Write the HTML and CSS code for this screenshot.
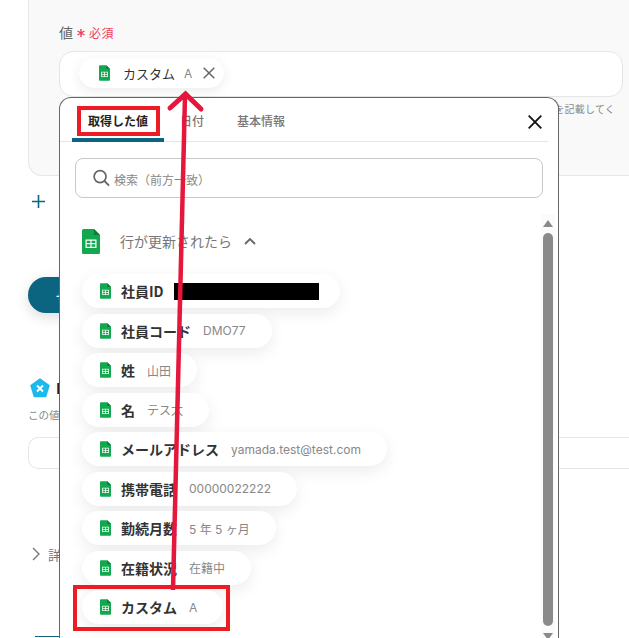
FILE: index.html
```html
<!DOCTYPE html>
<html lang="ja">
<head>
<meta charset="utf-8">
<title>値の設定</title>
<link rel="stylesheet" href="styles.css">
</head>
<body>
<svg class="defs" width="0" height="0" aria-hidden="true">
  <symbol id="sheet" viewBox="0 0 18 25">
    <path d="M1.5 0H12l6 6v17.5a1.5 1.5 0 0 1-1.5 1.5h-15A1.5 1.5 0 0 1 0 23.500V1.500A1.500 1.500 0 0 1 1.500 0z" fill="#11a84f"/>
    <path d="M12 0l6 6h-6z" fill="#0b7d3b"/>
    <path d="M3.500 10.500h11v8.500h-11z" fill="#fff"/>
    <path d="M4.700 11.800h3.700v2.300H4.700zM9.600 11.800h3.700v2.300H9.600zM4.700 15.300h3.700v2.400H4.700zM9.600 15.300h3.700v2.400H9.600z" fill="#11a84f"/>
  </symbol>
</svg>

<main class="page">
  <section class="card">
    <div class="field-label">
      <span class="label-text">値</span>
      <svg class="asterisk" viewBox="0 0 9 9"><path d="M4.500 0v9M.6 2.250l7.800 4.500M8.400 2.250l-7.800 4.500" stroke="#ef3f5f" stroke-width="1.600" fill="none"/></svg>
      <span class="required">必須</span>
    </div>
    <div class="value-input">
      <div class="input-chip">
        <svg class="icon-sm"><use href="#sheet"/></svg>
        <span class="input-chip-name">カスタム</span>
        <span class="input-chip-value">A</span>
        <svg class="input-chip-x" viewBox="0 0 12 12"><path d="M.7.7l10.600 10.600M11.300.7L.7 11.300" stroke="#666" stroke-width="1.500" fill="none"/></svg>
      </div>
    </div>
    <p class="hint">を記載してく</p>
  </section>

  <div class="add-row">
    <svg class="plus" viewBox="0 0 13 13"><path d="M6.500 0v13M0 6.500h13" stroke="#0b6480" stroke-width="1.600" fill="none"/></svg>
  </div>

  <button class="primary-btn">+ 追加する</button>

  <div class="section-title">
    <svg class="pentagon" viewBox="0 0 20 20">
      <path d="M10 1l9 6.500-3.400 11H4.400L1 7.500z" fill="#1cb9ec" stroke="#1cb9ec" stroke-width="1.500" stroke-linejoin="round"/>
      <path d="M7 7.500l6 6M13 7.500l-6 6" stroke="#fff" stroke-width="1.900"/>
    </svg>
    <span class="section-name">ID</span>
  </div>
  <p class="section-note">この値を使用します</p>
  <div class="plain-input"></div>

  <div class="detail-row">
    <svg class="detail-chevron" viewBox="0 0 8 14"><path d="M1 1l6 6-6 6" stroke="#777" stroke-width="1.400" fill="none"/></svg>
    <span class="detail-text">詳細</span>
  </div>
  <div class="bottom-btn"></div>
</main>

<aside class="panel">
  <div class="tabs">
    <div class="tab tab-active">取得した値</div>
    <div class="tab">日付</div>
    <div class="tab tab-wide">基本情報</div>
    <svg class="panel-close" viewBox="0 0 14 14"><path d="M.7.7l12.600 12.600M13.300.7L.7 13.300" stroke="#111" stroke-width="1.800" fill="none"/></svg>
  </div>
  <div class="search">
    <svg class="search-icon" viewBox="0 0 18 18"><circle cx="7.500" cy="7.500" r="6.300" stroke="#666" stroke-width="1.800" fill="none"/><path d="M12 12l5 5" stroke="#666" stroke-width="2" fill="none"/></svg>
    <span class="search-text">検索（前方一致）</span>
  </div>
  <div class="group-head">
    <svg class="icon-lg"><use href="#sheet"/></svg>
    <span class="group-name">行が更新されたら</span>
    <svg class="group-chevron" viewBox="0 0 12 8"><path d="M1 7l5-5 5 5" stroke="#666" stroke-width="1.800" fill="none"/></svg>
  </div>
  <ul class="list">
    <li class="chip"><svg class="icon-sm"><use href="#sheet"/></svg><span class="chip-name">社員ID</span><span class="redact"></span></li>
    <li class="chip"><svg class="icon-sm"><use href="#sheet"/></svg><span class="chip-name">社員コード</span><span class="chip-value">DMO77</span></li>
    <li class="chip"><svg class="icon-sm"><use href="#sheet"/></svg><span class="chip-name">姓</span><span class="chip-value">山田</span></li>
    <li class="chip"><svg class="icon-sm"><use href="#sheet"/></svg><span class="chip-name">名</span><span class="chip-value">テス太</span></li>
    <li class="chip"><svg class="icon-sm"><use href="#sheet"/></svg><span class="chip-name">メールアドレス</span><span class="chip-value">yamada.test@test.com</span></li>
    <li class="chip"><svg class="icon-sm"><use href="#sheet"/></svg><span class="chip-name">携帯電話</span><span class="chip-value">00000022222</span></li>
    <li class="chip"><svg class="icon-sm"><use href="#sheet"/></svg><span class="chip-name">勤続月数</span><span class="chip-value">5 年 5 ヶ月</span></li>
    <li class="chip"><svg class="icon-sm"><use href="#sheet"/></svg><span class="chip-name">在籍状況</span><span class="chip-value">在籍中</span></li>
    <li class="chip"><svg class="icon-sm"><use href="#sheet"/></svg><span class="chip-name">カスタム</span><span class="chip-value">A</span></li>
  </ul>
  <div class="scrollbar">
    <span class="scroll-up"></span>
    <span class="scroll-thumb"></span>
    <span class="scroll-down"></span>
  </div>
</aside>

<div class="mark mark-tab"></div>
<div class="mark mark-item"></div>
<svg class="arrow" viewBox="0 0 629 638">
  <path d="M173 590L185 96" stroke="#e6173c" stroke-width="4.500" fill="none"/>
  <path d="M170 108L185.500 94L201 109" stroke="#e6173c" stroke-width="5" fill="none" stroke-linecap="round" stroke-linejoin="miter"/>
</svg>
</body>
</html>
```

FILE: styles.css
```css
* { box-sizing: border-box; }

html, body {
  margin: 0;
  height: 638px;
  overflow: hidden;
  background: #fff;
}

body {
  position: relative;
  width: 629px;
  font-family: "Noto Sans CJK JP", "Noto Sans", sans-serif;
  color: #333;
}

.defs { position: absolute; }

.page {
  height: 638px;
  padding-left: 28px;
  display: flex;
  flex-direction: column;
  overflow: hidden;
}

/* background form */
.card {
  height: 206px;
  flex: none;
  margin-top: -30px;
  padding: 49px 0 0 30px;
  background: #f9f9f9;
  border: 1px solid #e6e6e6;
  border-right: 0;
  border-radius: 14px 0 0 14px;
}

.field-label {
  display: flex;
  align-items: center;
  height: 24px;
}

.label-text { font-size: 14px; color: #666; }
.asterisk { width: 8px; height: 8px; margin: 2px 0 0 4px; }
.required { margin-left: 4px; font-size: 12px; letter-spacing: .5px; color: #ef3f5f; }

.value-input {
  width: 564px;
  height: 46px;
  margin-top: 7px;
  padding: 6px 0 0 19px;
  background: #fff;
  border: 1px solid #e5e5e5;
  border-radius: 14px;
}

.input-chip {
  display: flex;
  align-items: center;
  width: 145px;
  height: 30px;
  padding-left: 20px;
  background: #fff;
  border-radius: 15px;
  box-shadow: 0 3px 12px rgba(0, 0, 0, .08);
}

.input-chip-name { margin-left: 13px; font-size: 13px; color: #333; }
.input-chip-value { margin-left: 9px; font-size: 12px; color: #888; font-family: "Inter", sans-serif; }
.input-chip-x { width: 12px; height: 12px; margin-left: 11px; }

.hint {
  width: 556px;
  margin: 5px 0 0;
  font-size: 10px;
  letter-spacing: .2px;
  line-height: 14px;
  text-align: right;
  color: #888;
}

.add-row { height: 52px; flex: none; padding: 19px 0 0 4px; }
.plus { display: block; width: 13px; height: 13px; }

.primary-btn {
  width: 210px;
  height: 36px;
  flex: none;
  margin-top: 49px;
  padding: 0 0 0 28px;
  border: 0;
  border-radius: 18px;
  text-align: left;
  background: #0b6480;
  color: #fff;
  font: 700 13px "Noto Sans CJK JP", sans-serif;
  box-shadow: 0 4px 14px rgba(0, 0, 0, .14);
}

.section-title {
  display: flex;
  align-items: center;
  gap: 6px;
  flex: none;
  margin-top: 65px;
  height: 20px;
  padding-left: 2px;
}

.pentagon { width: 20px; height: 20px; }
.section-name { font-size: 14px; font-weight: 700; color: #222; }

.section-note {
  margin: 9px 0 0;
  font-size: 10.500px;
  line-height: 15px;
  color: #888;
}

.plain-input {
  flex: none;
  height: 32px;
  margin-top: 15px;
  background: #fff;
  border: 1px solid #e5e5e5;
  border-right: 0;
  border-radius: 10px 0 0 10px;
}

.detail-row {
  display: flex;
  align-items: center;
  gap: 8px;
  flex: none;
  margin-top: 75px;
  height: 20px;
  padding-left: 4px;
}

.detail-chevron { width: 8px; height: 14px; }
.detail-text { font-size: 13px; color: #777; }

.bottom-btn {
  width: 120px;
  height: 1px;
  flex: none;
  margin: 72px 0 0 7px;
  background: #0b6480;
}

/* popover */
.panel {
  position: absolute;
  left: 59px;
  top: 97px;
  width: 500px;
  height: 541px;
  background: #fff;
  border: 1px solid #666;
  border-bottom: 0;
  border-radius: 12px 12px 0 0;
  overflow: hidden;
}

.tabs {
  position: relative;
  display: flex;
  height: 44px;
  margin-right: 10px;
  padding-left: 12px;
  border-bottom: 1px solid #e5e5e5;
}

.tab {
  padding: 14px 16px 0;
  font-size: 12px;
  line-height: 18px;
  color: #777;
  font-weight: 500;
}

.tab-wide { margin-left: 1px; }

.tab-active {
  width: 92px;
  margin-bottom: -1px;
  color: #222;
  font-weight: 700;
  border-bottom: 4px solid #0b6480;
  border-radius: 4px 4px 0 0;
}

.panel-close {
  position: absolute;
  right: 6px;
  top: 17px;
  width: 14px;
  height: 14px;
}

.search {
  display: flex;
  align-items: center;
  height: 40px;
  margin: 16px 0 0 15px;
  width: 468px;
  padding-left: 17px;
  border: 1px solid #c8c8c8;
  border-radius: 8px;
}

.search-icon { width: 17px; height: 18px; }
.search-text { margin: 2px 0 0 4px; font-size: 12px; color: #888; }

.group-head {
  display: flex;
  align-items: center;
  height: 26px;
  margin: 30px 0 0 22px;
}

.icon-lg { width: 18px; height: 25px; }
.group-name { margin-left: 20px; font-size: 14px; color: #777; }
.group-chevron { width: 12px; height: 8px; margin-left: 12px; }

.list {
  list-style: none;
  display: flex;
  flex-direction: column;
  align-items: flex-start;
  gap: 5.500px;
  margin: 20px 0 0 22px;
  padding: 0;
}

.chip {
  display: flex;
  align-items: center;
  height: 34px;
  padding: 0 26px 0 18px;
  background: #fff;
  border-radius: 17px;
  box-shadow: 0 5px 16px rgba(0, 0, 0, .08);
}

.icon-sm { width: 11px; height: 16px; flex: none; }
.chip-name { margin-left: 10px; font-size: 14px; font-weight: 700; color: #333; white-space: nowrap; }
.chip-value { margin-left: 12px; font-size: 12px; color: #888; white-space: nowrap; font-family: "Inter", "Noto Sans CJK JP", sans-serif; }
.redact { width: 145px; height: 17px; margin: 0 -5px 0 10px; background: #000; }

.scrollbar {
  position: absolute;
  left: 481px;
  top: 116px;
  width: 14px;
  height: 426px;
  overflow: hidden;
  background: #fbfbfb;
}

.scroll-up, .scroll-down {
  position: absolute;
  left: 2px;
  width: 0;
  height: 0;
  border-left: 5px solid transparent;
  border-right: 5px solid transparent;
}

.scroll-up { top: 6px; border-bottom: 7px solid #8a8a8a; }
.scroll-down { top: 419px; border-top: 7px solid #8a8a8a; }

.scroll-thumb {
  position: absolute;
  left: 2px;
  top: 19px;
  width: 10px;
  height: 393px;
  border-radius: 5px;
  background: #8a8a8a;
}

/* annotations */
.mark {
  position: absolute;
  border: 4px solid #ed1c24;
}

.mark-tab { left: 77px; top: 106px; width: 83px; height: 30px; }
.mark-item { left: 73px; top: 585px; width: 157px; height: 46px; }

.arrow {
  position: absolute;
  left: 0;
  top: 0;
  width: 629px;
  height: 638px;
  pointer-events: none;
}
```
